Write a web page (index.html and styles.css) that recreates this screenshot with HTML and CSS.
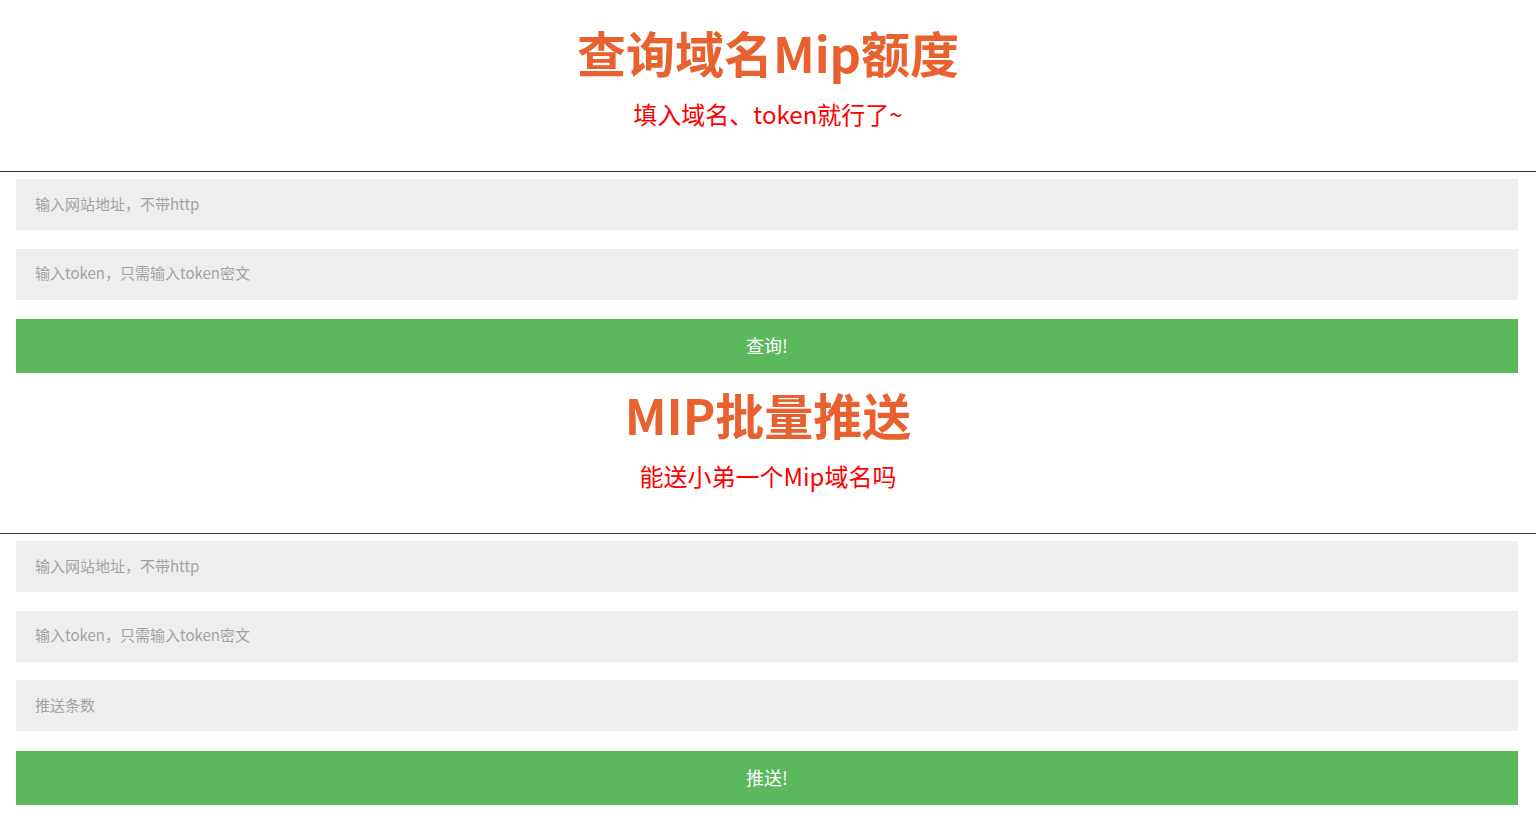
FILE: index.html
```html
<!DOCTYPE html>
<html lang="zh">
<head>
<meta charset="utf-8">
<title>查询域名Mip额度</title>
<link rel="stylesheet" href="styles.css">
</head>
<body>
<main class="page">
  <section class="block">
    <header class="head">
      <h1 class="title">查询域名Mip额度</h1>
      <p class="subtitle">填入域名、token就行了~</p>
    </header>
    <hr class="rule">
    <form class="form">
      <input class="field" type="text" placeholder="输入网站地址，不带http">
      <input class="field" type="text" placeholder="输入token，只需输入token密文">
      <button class="btn" type="button">查询!</button>
    </form>
  </section>
  <section class="block">
    <header class="head">
      <h1 class="title">MIP批量推送</h1>
      <p class="subtitle">能送小弟一个Mip域名吗</p>
    </header>
    <hr class="rule">
    <form class="form">
      <input class="field" type="text" placeholder="输入网站地址，不带http">
      <input class="field" type="text" placeholder="输入token，只需输入token密文">
      <input class="field" type="text" placeholder="推送条数">
      <button class="btn" type="button">推送!</button>
    </form>
  </section>
</main>
</body>
</html>
```

FILE: styles.css
```css
* { box-sizing: border-box; }
html, body { margin: 0; padding: 0; background: #fff; }
body {
  font-family: "Microsoft YaHei", "Noto Sans CJK SC", "Noto Sans", sans-serif;
}
.page { padding-top: 11px; }
.block { display: flex; flex-direction: column; }
.head {
  text-align: center;
  padding: 11px 0 42px;
}
.title {
  margin: 0;
  font-size: 49px;
  line-height: 60px;
  font-weight: 700;
  color: #e8612f;
}
.subtitle {
  margin: 17px 0 0;
  font-size: 24px;
  line-height: 30px;
  color: #ff0000;
}
.rule {
  margin: 0;
  border: 0;
  height: 1px;
  background: #333;
}
.form {
  display: flex;
  flex-direction: column;
  gap: 18.5px;
  padding: 7px 18px 0 16px;
}
.field {
  display: block;
  width: 100%;
  height: 51px;
  margin: 0;
  border: 0;
  outline: none;
  background: #eeeeee;
  padding: 0 19px 3px;
  font-family: inherit;
  font-size: 15px;
  color: #666;
}
.field::placeholder { color: #a3a3a3; }
.btn {
  display: block;
  width: 100%;
  height: 54px;
  margin-top: 1px;
  border: 0;
  padding: 0 0 2px;
  background: #5cb85c;
  color: #fff;
  font-family: inherit;
  font-size: 18px;
  cursor: pointer;
}
```
